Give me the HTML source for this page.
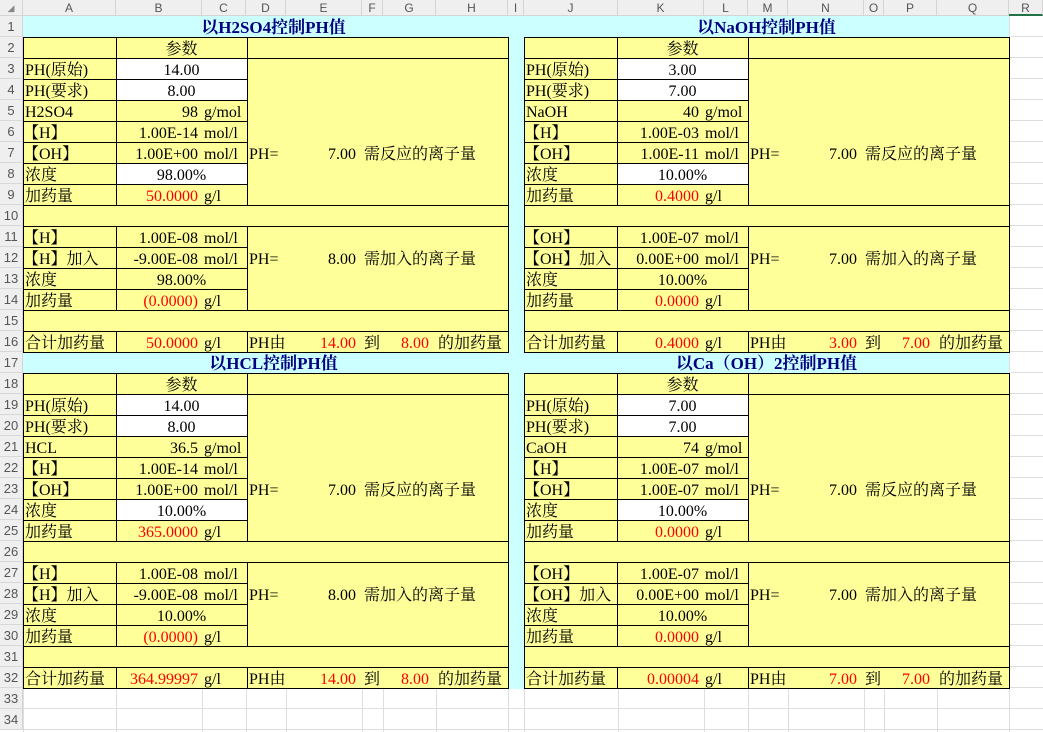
<!DOCTYPE html>
<html><head><meta charset="utf-8"><style>
*{margin:0;padding:0;box-sizing:border-box}
body{width:1043px;height:732px;position:relative;overflow:hidden;background:#fff;font-family:"Liberation Serif","Noto Serif CJK SC",serif;font-size:16px;color:#000}
.grid{position:absolute;left:0;top:16px;width:1043px;height:716px;background:repeating-linear-gradient(to bottom,transparent 0,transparent 20px,#dedede 20px,#dedede 21px)}
.vl{position:absolute;top:0;width:1px;height:732px;background:#dedede}
.ch{position:absolute;top:0;height:16px;line-height:16px;font-family:"Liberation Sans",sans-serif;font-size:12px;color:#555;text-align:center;background:#efefef;border-right:1px solid #d4d4d4;border-bottom:1px solid #d4d4d4}
.rh{position:absolute;left:0;width:23px;height:21px;line-height:22px;font-family:"Liberation Sans",sans-serif;font-size:13px;color:#555;text-align:center;background:#efefef;border-right:1px solid #d4d4d4;border-bottom:1px solid #d8d8d8}
.cy{position:absolute;background:#ccffff;z-index:1}
.title{position:absolute;height:21px;line-height:23px;text-align:center;font-weight:bold;color:#000080;font-size:17px;z-index:2}
.blk{position:absolute;width:485px;height:316px;z-index:3}
.c{position:absolute;border:1px solid #000;background:#ffff99}
.w{background:#fff}
.t{position:absolute;height:21px;line-height:24px;white-space:nowrap}
.v{left:93px;width:131px;text-align:center}
.n{right:310px}
.u{left:181px}
.r{color:#f00}
</style></head><body>
<div class="grid"></div>
<div class="vl" style="left:23px"></div><div class="vl" style="left:116px"></div><div class="vl" style="left:202px"></div><div class="vl" style="left:246px"></div><div class="vl" style="left:286px"></div><div class="vl" style="left:362px"></div><div class="vl" style="left:383px"></div><div class="vl" style="left:436px"></div><div class="vl" style="left:508px"></div><div class="vl" style="left:524px"></div><div class="vl" style="left:618px"></div><div class="vl" style="left:704px"></div><div class="vl" style="left:748px"></div><div class="vl" style="left:788px"></div><div class="vl" style="left:864px"></div><div class="vl" style="left:884px"></div><div class="vl" style="left:937px"></div><div class="vl" style="left:1009px"></div>

<div class="ch" style="left:0;width:23px;font-size:9px;color:#888">◢</div>
<div class="ch" style="left:23px;width:93px">A</div><div class="ch" style="left:116px;width:86px">B</div><div class="ch" style="left:202px;width:44px">C</div><div class="ch" style="left:246px;width:40px">D</div><div class="ch" style="left:286px;width:76px">E</div><div class="ch" style="left:362px;width:21px">F</div><div class="ch" style="left:383px;width:53px">G</div><div class="ch" style="left:436px;width:72px">H</div><div class="ch" style="left:508px;width:16px">I</div><div class="ch" style="left:524px;width:94px">J</div><div class="ch" style="left:618px;width:86px">K</div><div class="ch" style="left:704px;width:44px">L</div><div class="ch" style="left:748px;width:40px">M</div><div class="ch" style="left:788px;width:76px">N</div><div class="ch" style="left:864px;width:20px">O</div><div class="ch" style="left:884px;width:53px">P</div><div class="ch" style="left:937px;width:72px">Q</div><div class="ch" style="left:1009px;width:34px;border-bottom:2px solid #217346">R</div>

<div class="rh" style="top:16px">1</div><div class="rh" style="top:37px">2</div><div class="rh" style="top:58px">3</div><div class="rh" style="top:79px">4</div><div class="rh" style="top:100px">5</div><div class="rh" style="top:121px">6</div><div class="rh" style="top:142px">7</div><div class="rh" style="top:163px">8</div><div class="rh" style="top:184px">9</div><div class="rh" style="top:205px">10</div><div class="rh" style="top:226px">11</div><div class="rh" style="top:247px">12</div><div class="rh" style="top:268px">13</div><div class="rh" style="top:289px">14</div><div class="rh" style="top:310px">15</div><div class="rh" style="top:331px">16</div><div class="rh" style="top:352px">17</div><div class="rh" style="top:373px">18</div><div class="rh" style="top:394px">19</div><div class="rh" style="top:415px">20</div><div class="rh" style="top:436px">21</div><div class="rh" style="top:457px">22</div><div class="rh" style="top:478px">23</div><div class="rh" style="top:499px">24</div><div class="rh" style="top:520px">25</div><div class="rh" style="top:541px">26</div><div class="rh" style="top:562px">27</div><div class="rh" style="top:583px">28</div><div class="rh" style="top:604px">29</div><div class="rh" style="top:625px">30</div><div class="rh" style="top:646px">31</div><div class="rh" style="top:667px">32</div><div class="rh" style="top:688px">33</div><div class="rh" style="top:709px">34</div>

<div class="cy" style="left:23px;top:16px;width:986px;height:22px"></div>
<div class="cy" style="left:23px;top:352px;width:986px;height:22px"></div>
<div class="title" style="left:23px;top:16px;width:501px">以H2SO4控制PH值</div>
<div class="title" style="left:524px;top:16px;width:485px">以NaOH控制PH值</div>
<div class="title" style="left:23px;top:352px;width:501px">以HCL控制PH值</div>
<div class="title" style="left:524px;top:352px;width:485px">以Ca（OH）2控制PH值</div>

<!-- Block 1 -->
<div class="blk" style="left:23px;top:37px">
<div class="c" style="left:0;top:0;width:94px;height:22px"></div><div class="c" style="left:93px;top:0;width:132px;height:22px"></div><div class="c" style="left:224px;top:0;width:262px;height:22px"></div>
<div class="c" style="left:0;top:21px;width:94px;height:22px"></div><div class="c w" style="left:93px;top:21px;width:132px;height:22px"></div>
<div class="c" style="left:0;top:42px;width:94px;height:22px"></div><div class="c w" style="left:93px;top:42px;width:132px;height:22px"></div>
<div class="c" style="left:0;top:63px;width:94px;height:22px"></div><div class="c" style="left:93px;top:63px;width:132px;height:22px"></div>
<div class="c" style="left:0;top:84px;width:94px;height:22px"></div><div class="c" style="left:93px;top:84px;width:132px;height:22px"></div>
<div class="c" style="left:0;top:105px;width:94px;height:22px"></div><div class="c" style="left:93px;top:105px;width:132px;height:22px"></div>
<div class="c" style="left:0;top:126px;width:94px;height:22px"></div><div class="c w" style="left:93px;top:126px;width:132px;height:22px"></div>
<div class="c" style="left:0;top:147px;width:94px;height:22px"></div><div class="c" style="left:93px;top:147px;width:132px;height:22px"></div>
<div class="c" style="left:224px;top:21px;width:262px;height:148px"></div>
<div class="c" style="left:0;top:168px;width:486px;height:22px"></div>
<div class="c" style="left:0;top:189px;width:94px;height:22px"></div><div class="c" style="left:93px;top:189px;width:132px;height:22px"></div>
<div class="c" style="left:0;top:210px;width:94px;height:22px"></div><div class="c" style="left:93px;top:210px;width:132px;height:22px"></div>
<div class="c" style="left:0;top:231px;width:94px;height:22px"></div><div class="c" style="left:93px;top:231px;width:132px;height:22px"></div>
<div class="c" style="left:0;top:252px;width:94px;height:22px"></div><div class="c" style="left:93px;top:252px;width:132px;height:22px"></div>
<div class="c" style="left:224px;top:189px;width:262px;height:85px"></div>
<div class="c" style="left:0;top:273px;width:486px;height:22px"></div>
<div class="c" style="left:0;top:294px;width:94px;height:22px"></div><div class="c" style="left:93px;top:294px;width:132px;height:22px"></div><div class="c" style="left:224px;top:294px;width:262px;height:22px"></div>
<span class="t v" style="top:1px">参数</span>
<span class="t" style="left:2px;top:22px">PH(原始)</span><span class="t v" style="top:22px">14.00</span>
<span class="t" style="left:2px;top:43px">PH(要求)</span><span class="t v" style="top:43px">8.00</span>
<span class="t" style="left:2px;top:64px">H2SO4</span><span class="t n" style="top:64px">98</span><span class="t u" style="top:64px">g/mol</span>
<span class="t" style="left:0;top:85px">【H】</span><span class="t n" style="top:85px">1.00E-14</span><span class="t u" style="top:85px">mol/l</span>
<span class="t" style="left:0;top:106px">【OH】</span><span class="t n" style="top:106px">1.00E+00</span><span class="t u" style="top:106px">mol/l</span>
<span class="t" style="left:2px;top:127px">浓度</span><span class="t v" style="top:127px">98.00%</span>
<span class="t" style="left:2px;top:148px">加药量</span><span class="t n r" style="top:148px">50.0000</span><span class="t u" style="top:148px">g/l</span>
<span class="t" style="left:226px;top:106px">PH=</span><span class="t" style="right:152px;top:106px">7.00</span><span class="t" style="left:341px;top:106px">需反应的离子量</span>
<span class="t" style="left:0;top:190px">【H】</span><span class="t n" style="top:190px">1.00E-08</span><span class="t u" style="top:190px">mol/l</span>
<span class="t" style="left:0;top:211px">【H】加入</span><span class="t n" style="top:211px">-9.00E-08</span><span class="t u" style="top:211px">mol/l</span>
<span class="t" style="left:2px;top:232px">浓度</span><span class="t v" style="top:232px">98.00%</span>
<span class="t" style="left:2px;top:253px">加药量</span><span class="t n r" style="top:253px">(0.0000)</span><span class="t u" style="top:253px">g/l</span>
<span class="t" style="left:226px;top:211px">PH=</span><span class="t" style="right:152px;top:211px">8.00</span><span class="t" style="left:341px;top:211px">需加入的离子量</span>
<span class="t" style="left:2px;top:295px">合计加药量</span><span class="t n r" style="top:295px">50.0000</span><span class="t u" style="top:295px">g/l</span>
<span class="t" style="left:226px;top:295px">PH由</span><span class="t r" style="right:152px;top:295px">14.00</span><span class="t" style="left:341px;top:295px">到</span><span class="t r" style="right:79px;top:295px">8.00</span><span class="t" style="left:415px;top:295px">的加药量</span>
</div>

<!-- Block 2 -->
<div class="blk" style="left:524px;top:37px">
<div class="c" style="left:0;top:0;width:94px;height:22px"></div><div class="c" style="left:93px;top:0;width:132px;height:22px"></div><div class="c" style="left:224px;top:0;width:262px;height:22px"></div>
<div class="c" style="left:0;top:21px;width:94px;height:22px"></div><div class="c w" style="left:93px;top:21px;width:132px;height:22px"></div>
<div class="c" style="left:0;top:42px;width:94px;height:22px"></div><div class="c w" style="left:93px;top:42px;width:132px;height:22px"></div>
<div class="c" style="left:0;top:63px;width:94px;height:22px"></div><div class="c" style="left:93px;top:63px;width:132px;height:22px"></div>
<div class="c" style="left:0;top:84px;width:94px;height:22px"></div><div class="c" style="left:93px;top:84px;width:132px;height:22px"></div>
<div class="c" style="left:0;top:105px;width:94px;height:22px"></div><div class="c" style="left:93px;top:105px;width:132px;height:22px"></div>
<div class="c" style="left:0;top:126px;width:94px;height:22px"></div><div class="c w" style="left:93px;top:126px;width:132px;height:22px"></div>
<div class="c" style="left:0;top:147px;width:94px;height:22px"></div><div class="c" style="left:93px;top:147px;width:132px;height:22px"></div>
<div class="c" style="left:224px;top:21px;width:262px;height:148px"></div>
<div class="c" style="left:0;top:168px;width:486px;height:22px"></div>
<div class="c" style="left:0;top:189px;width:94px;height:22px"></div><div class="c" style="left:93px;top:189px;width:132px;height:22px"></div>
<div class="c" style="left:0;top:210px;width:94px;height:22px"></div><div class="c" style="left:93px;top:210px;width:132px;height:22px"></div>
<div class="c" style="left:0;top:231px;width:94px;height:22px"></div><div class="c" style="left:93px;top:231px;width:132px;height:22px"></div>
<div class="c" style="left:0;top:252px;width:94px;height:22px"></div><div class="c" style="left:93px;top:252px;width:132px;height:22px"></div>
<div class="c" style="left:224px;top:189px;width:262px;height:85px"></div>
<div class="c" style="left:0;top:273px;width:486px;height:22px"></div>
<div class="c" style="left:0;top:294px;width:94px;height:22px"></div><div class="c" style="left:93px;top:294px;width:132px;height:22px"></div><div class="c" style="left:224px;top:294px;width:262px;height:22px"></div>
<span class="t v" style="top:1px">参数</span>
<span class="t" style="left:2px;top:22px">PH(原始)</span><span class="t v" style="top:22px">3.00</span>
<span class="t" style="left:2px;top:43px">PH(要求)</span><span class="t v" style="top:43px">7.00</span>
<span class="t" style="left:2px;top:64px">NaOH</span><span class="t n" style="top:64px">40</span><span class="t u" style="top:64px">g/mol</span>
<span class="t" style="left:0;top:85px">【H】</span><span class="t n" style="top:85px">1.00E-03</span><span class="t u" style="top:85px">mol/l</span>
<span class="t" style="left:0;top:106px">【OH】</span><span class="t n" style="top:106px">1.00E-11</span><span class="t u" style="top:106px">mol/l</span>
<span class="t" style="left:2px;top:127px">浓度</span><span class="t v" style="top:127px">10.00%</span>
<span class="t" style="left:2px;top:148px">加药量</span><span class="t n r" style="top:148px">0.4000</span><span class="t u" style="top:148px">g/l</span>
<span class="t" style="left:226px;top:106px">PH=</span><span class="t" style="right:152px;top:106px">7.00</span><span class="t" style="left:341px;top:106px">需反应的离子量</span>
<span class="t" style="left:0;top:190px">【OH】</span><span class="t n" style="top:190px">1.00E-07</span><span class="t u" style="top:190px">mol/l</span>
<span class="t" style="left:0;top:211px">【OH】加入</span><span class="t n" style="top:211px">0.00E+00</span><span class="t u" style="top:211px">mol/l</span>
<span class="t" style="left:2px;top:232px">浓度</span><span class="t v" style="top:232px">10.00%</span>
<span class="t" style="left:2px;top:253px">加药量</span><span class="t n r" style="top:253px">0.0000</span><span class="t u" style="top:253px">g/l</span>
<span class="t" style="left:226px;top:211px">PH=</span><span class="t" style="right:152px;top:211px">7.00</span><span class="t" style="left:341px;top:211px">需加入的离子量</span>
<span class="t" style="left:2px;top:295px">合计加药量</span><span class="t n r" style="top:295px">0.4000</span><span class="t u" style="top:295px">g/l</span>
<span class="t" style="left:226px;top:295px">PH由</span><span class="t r" style="right:152px;top:295px">3.00</span><span class="t" style="left:341px;top:295px">到</span><span class="t r" style="right:79px;top:295px">7.00</span><span class="t" style="left:415px;top:295px">的加药量</span>
</div>

<!-- Block 3 -->
<div class="blk" style="left:23px;top:373px">
<div class="c" style="left:0;top:0;width:94px;height:22px"></div><div class="c" style="left:93px;top:0;width:132px;height:22px"></div><div class="c" style="left:224px;top:0;width:262px;height:22px"></div>
<div class="c" style="left:0;top:21px;width:94px;height:22px"></div><div class="c w" style="left:93px;top:21px;width:132px;height:22px"></div>
<div class="c" style="left:0;top:42px;width:94px;height:22px"></div><div class="c w" style="left:93px;top:42px;width:132px;height:22px"></div>
<div class="c" style="left:0;top:63px;width:94px;height:22px"></div><div class="c" style="left:93px;top:63px;width:132px;height:22px"></div>
<div class="c" style="left:0;top:84px;width:94px;height:22px"></div><div class="c" style="left:93px;top:84px;width:132px;height:22px"></div>
<div class="c" style="left:0;top:105px;width:94px;height:22px"></div><div class="c" style="left:93px;top:105px;width:132px;height:22px"></div>
<div class="c" style="left:0;top:126px;width:94px;height:22px"></div><div class="c w" style="left:93px;top:126px;width:132px;height:22px"></div>
<div class="c" style="left:0;top:147px;width:94px;height:22px"></div><div class="c" style="left:93px;top:147px;width:132px;height:22px"></div>
<div class="c" style="left:224px;top:21px;width:262px;height:148px"></div>
<div class="c" style="left:0;top:168px;width:486px;height:22px"></div>
<div class="c" style="left:0;top:189px;width:94px;height:22px"></div><div class="c" style="left:93px;top:189px;width:132px;height:22px"></div>
<div class="c" style="left:0;top:210px;width:94px;height:22px"></div><div class="c" style="left:93px;top:210px;width:132px;height:22px"></div>
<div class="c" style="left:0;top:231px;width:94px;height:22px"></div><div class="c" style="left:93px;top:231px;width:132px;height:22px"></div>
<div class="c" style="left:0;top:252px;width:94px;height:22px"></div><div class="c" style="left:93px;top:252px;width:132px;height:22px"></div>
<div class="c" style="left:224px;top:189px;width:262px;height:85px"></div>
<div class="c" style="left:0;top:273px;width:486px;height:22px"></div>
<div class="c" style="left:0;top:294px;width:94px;height:22px"></div><div class="c" style="left:93px;top:294px;width:132px;height:22px"></div><div class="c" style="left:224px;top:294px;width:262px;height:22px"></div>
<span class="t v" style="top:1px">参数</span>
<span class="t" style="left:2px;top:22px">PH(原始)</span><span class="t v" style="top:22px">14.00</span>
<span class="t" style="left:2px;top:43px">PH(要求)</span><span class="t v" style="top:43px">8.00</span>
<span class="t" style="left:2px;top:64px">HCL</span><span class="t n" style="top:64px">36.5</span><span class="t u" style="top:64px">g/mol</span>
<span class="t" style="left:0;top:85px">【H】</span><span class="t n" style="top:85px">1.00E-14</span><span class="t u" style="top:85px">mol/l</span>
<span class="t" style="left:0;top:106px">【OH】</span><span class="t n" style="top:106px">1.00E+00</span><span class="t u" style="top:106px">mol/l</span>
<span class="t" style="left:2px;top:127px">浓度</span><span class="t v" style="top:127px">10.00%</span>
<span class="t" style="left:2px;top:148px">加药量</span><span class="t n r" style="top:148px">365.0000</span><span class="t u" style="top:148px">g/l</span>
<span class="t" style="left:226px;top:106px">PH=</span><span class="t" style="right:152px;top:106px">7.00</span><span class="t" style="left:341px;top:106px">需反应的离子量</span>
<span class="t" style="left:0;top:190px">【H】</span><span class="t n" style="top:190px">1.00E-08</span><span class="t u" style="top:190px">mol/l</span>
<span class="t" style="left:0;top:211px">【H】加入</span><span class="t n" style="top:211px">-9.00E-08</span><span class="t u" style="top:211px">mol/l</span>
<span class="t" style="left:2px;top:232px">浓度</span><span class="t v" style="top:232px">10.00%</span>
<span class="t" style="left:2px;top:253px">加药量</span><span class="t n r" style="top:253px">(0.0000)</span><span class="t u" style="top:253px">g/l</span>
<span class="t" style="left:226px;top:211px">PH=</span><span class="t" style="right:152px;top:211px">8.00</span><span class="t" style="left:341px;top:211px">需加入的离子量</span>
<span class="t" style="left:2px;top:295px">合计加药量</span><span class="t n r" style="top:295px">364.99997</span><span class="t u" style="top:295px">g/l</span>
<span class="t" style="left:226px;top:295px">PH由</span><span class="t r" style="right:152px;top:295px">14.00</span><span class="t" style="left:341px;top:295px">到</span><span class="t r" style="right:79px;top:295px">8.00</span><span class="t" style="left:415px;top:295px">的加药量</span>
</div>

<!-- Block 4 -->
<div class="blk" style="left:524px;top:373px">
<div class="c" style="left:0;top:0;width:94px;height:22px"></div><div class="c" style="left:93px;top:0;width:132px;height:22px"></div><div class="c" style="left:224px;top:0;width:262px;height:22px"></div>
<div class="c" style="left:0;top:21px;width:94px;height:22px"></div><div class="c w" style="left:93px;top:21px;width:132px;height:22px"></div>
<div class="c" style="left:0;top:42px;width:94px;height:22px"></div><div class="c w" style="left:93px;top:42px;width:132px;height:22px"></div>
<div class="c" style="left:0;top:63px;width:94px;height:22px"></div><div class="c" style="left:93px;top:63px;width:132px;height:22px"></div>
<div class="c" style="left:0;top:84px;width:94px;height:22px"></div><div class="c" style="left:93px;top:84px;width:132px;height:22px"></div>
<div class="c" style="left:0;top:105px;width:94px;height:22px"></div><div class="c" style="left:93px;top:105px;width:132px;height:22px"></div>
<div class="c" style="left:0;top:126px;width:94px;height:22px"></div><div class="c w" style="left:93px;top:126px;width:132px;height:22px"></div>
<div class="c" style="left:0;top:147px;width:94px;height:22px"></div><div class="c" style="left:93px;top:147px;width:132px;height:22px"></div>
<div class="c" style="left:224px;top:21px;width:262px;height:148px"></div>
<div class="c" style="left:0;top:168px;width:486px;height:22px"></div>
<div class="c" style="left:0;top:189px;width:94px;height:22px"></div><div class="c" style="left:93px;top:189px;width:132px;height:22px"></div>
<div class="c" style="left:0;top:210px;width:94px;height:22px"></div><div class="c" style="left:93px;top:210px;width:132px;height:22px"></div>
<div class="c" style="left:0;top:231px;width:94px;height:22px"></div><div class="c" style="left:93px;top:231px;width:132px;height:22px"></div>
<div class="c" style="left:0;top:252px;width:94px;height:22px"></div><div class="c" style="left:93px;top:252px;width:132px;height:22px"></div>
<div class="c" style="left:224px;top:189px;width:262px;height:85px"></div>
<div class="c" style="left:0;top:273px;width:486px;height:22px"></div>
<div class="c" style="left:0;top:294px;width:94px;height:22px"></div><div class="c" style="left:93px;top:294px;width:132px;height:22px"></div><div class="c" style="left:224px;top:294px;width:262px;height:22px"></div>
<span class="t v" style="top:1px">参数</span>
<span class="t" style="left:2px;top:22px">PH(原始)</span><span class="t v" style="top:22px">7.00</span>
<span class="t" style="left:2px;top:43px">PH(要求)</span><span class="t v" style="top:43px">7.00</span>
<span class="t" style="left:2px;top:64px">CaOH</span><span class="t n" style="top:64px">74</span><span class="t u" style="top:64px">g/mol</span>
<span class="t" style="left:0;top:85px">【H】</span><span class="t n" style="top:85px">1.00E-07</span><span class="t u" style="top:85px">mol/l</span>
<span class="t" style="left:0;top:106px">【OH】</span><span class="t n" style="top:106px">1.00E-07</span><span class="t u" style="top:106px">mol/l</span>
<span class="t" style="left:2px;top:127px">浓度</span><span class="t v" style="top:127px">10.00%</span>
<span class="t" style="left:2px;top:148px">加药量</span><span class="t n r" style="top:148px">0.0000</span><span class="t u" style="top:148px">g/l</span>
<span class="t" style="left:226px;top:106px">PH=</span><span class="t" style="right:152px;top:106px">7.00</span><span class="t" style="left:341px;top:106px">需反应的离子量</span>
<span class="t" style="left:0;top:190px">【OH】</span><span class="t n" style="top:190px">1.00E-07</span><span class="t u" style="top:190px">mol/l</span>
<span class="t" style="left:0;top:211px">【OH】加入</span><span class="t n" style="top:211px">0.00E+00</span><span class="t u" style="top:211px">mol/l</span>
<span class="t" style="left:2px;top:232px">浓度</span><span class="t v" style="top:232px">10.00%</span>
<span class="t" style="left:2px;top:253px">加药量</span><span class="t n r" style="top:253px">0.0000</span><span class="t u" style="top:253px">g/l</span>
<span class="t" style="left:226px;top:211px">PH=</span><span class="t" style="right:152px;top:211px">7.00</span><span class="t" style="left:341px;top:211px">需加入的离子量</span>
<span class="t" style="left:2px;top:295px">合计加药量</span><span class="t n r" style="top:295px">0.00004</span><span class="t u" style="top:295px">g/l</span>
<span class="t" style="left:226px;top:295px">PH由</span><span class="t r" style="right:152px;top:295px">7.00</span><span class="t" style="left:341px;top:295px">到</span><span class="t r" style="right:79px;top:295px">7.00</span><span class="t" style="left:415px;top:295px">的加药量</span>
</div>
<div style="position:absolute;left:509px;top:16px;width:15px;height:673px;background:#ccffff;z-index:10"></div>
</body></html>
